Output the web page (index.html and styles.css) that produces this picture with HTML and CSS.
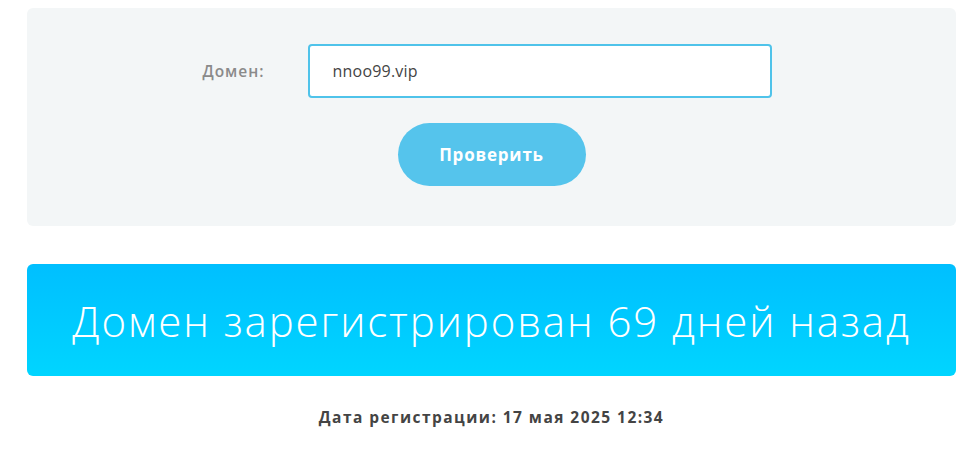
FILE: index.html
```html
<!DOCTYPE html>
<html lang="ru">
  <head>
    <meta charset="UTF-8" />
    <meta name="viewport" content="width=device-width, initial-scale=1.0" />
    <title>Проверка домена</title>
    <link rel="stylesheet" href="styles.css">
  </head>
  <body>
    <div class="page">
      <form class="check-form">
        <div class="form-row">
          <label class="form-label" for="domain">Домен:</label>
          <input class="form-input" id="domain" type="text" value="nnoo99.vip" />
        </div>
        <button class="check-button" type="button">Проверить</button>
      </form>

      <div class="result-banner">Домен зарегистрирован 69 дней назад</div>

      <p class="reg-date">Дата регистрации: 17 мая 2025 12:34</p>
    </div>
  </body>
</html>
```

FILE: styles.css
```css
body {
  margin: 0;
  background-color: #fff;
  font-family: "Open Sans", "DejaVu Sans", sans-serif;
}

.page {
  width: 929px;
  margin-left: 27px;
  padding-top: 8px;
}

.check-form {
  background-color: #f3f6f7;
  border-radius: 6px;
  padding: 36px 0 40px;
  display: flex;
  flex-direction: column;
  align-items: center;
  gap: 25px;
}

.form-row {
  display: flex;
  align-items: center;
  gap: 43px;
  margin-left: -9px;
}

.form-label {
  font-size: 15.5px;
  font-weight: 600;
  letter-spacing: 1px;
  color: #8a8a8a;
}

.form-input {
  box-sizing: border-box;
  width: 464px;
  height: 54px;
  border: 2px solid #4fc3ea;
  border-radius: 4px;
  padding: 0 23px;
  font-family: inherit;
  font-size: 16px;
  letter-spacing: 0.2px;
  color: #444;
  background-color: #fff;
  outline: none;
}

.check-button {
  width: 188px;
  height: 63px;
  border: none;
  border-radius: 32px;
  background-color: #55c4ec;
  color: #fff;
  font-family: inherit;
  font-size: 17px;
  font-weight: 700;
  letter-spacing: 0.8px;
  cursor: pointer;
}

.result-banner {
  margin-top: 38px;
  height: 112px;
  border-radius: 6px;
  background: linear-gradient(to bottom, #00bfff, #00d5ff);
  color: #fff;
  font-size: 42px;
  font-weight: 300;
  letter-spacing: 1.9px;
  display: flex;
  align-items: center;
  justify-content: center;
}

.reg-date {
  margin: 30px 0 0;
  text-align: center;
  font-size: 15.5px;
  font-weight: 700;
  letter-spacing: 1.45px;
  color: #444;
}
```
